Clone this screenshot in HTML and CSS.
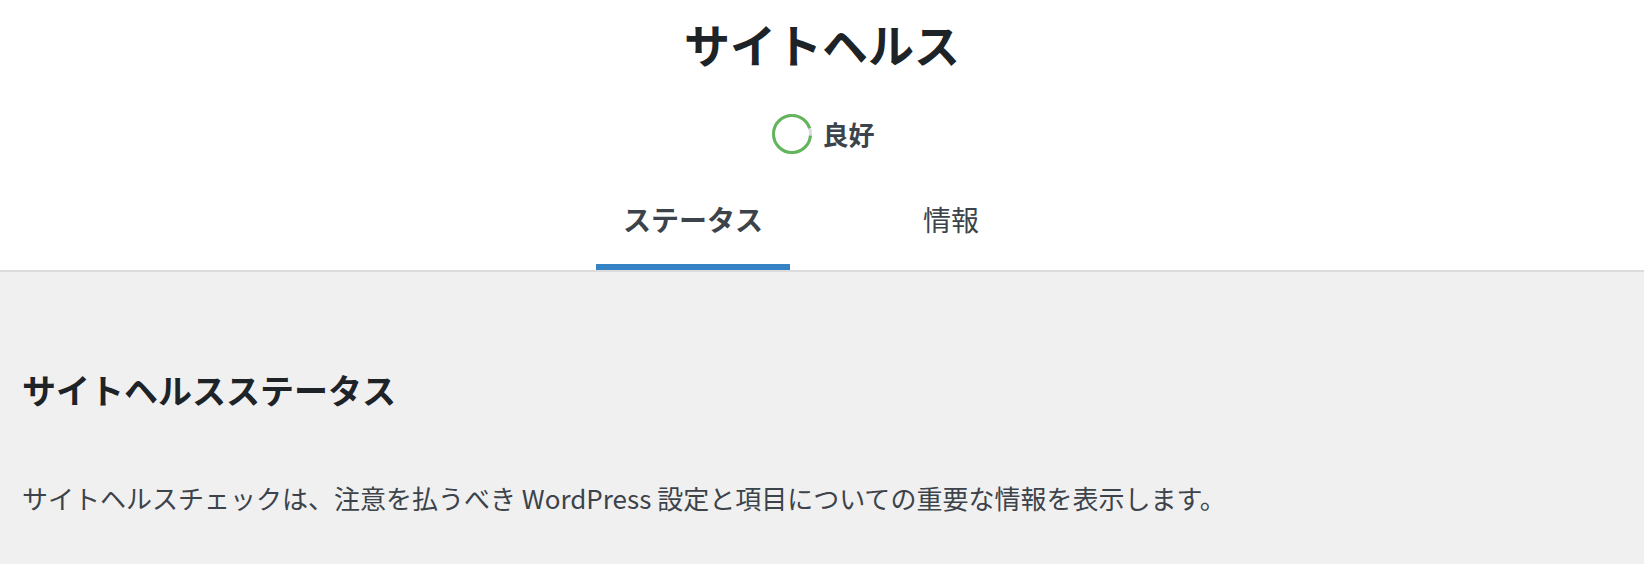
FILE: index.html
```html
<!DOCTYPE html>
<html lang="ja">
<head>
    <meta charset="UTF-8">
    <meta name="viewport" content="width=device-width, initial-scale=1.0">
    <title>サイトヘルス</title>
    <link rel="stylesheet" href="styles.css">
</head>
<body>
    <div class="health-header">
        <h1 class="health-title">サイトヘルス</h1>

        <div class="progress-wrapper">
            <svg class="progress-ring" width="40" height="40" viewBox="0 0 40 40">
                <circle cx="20" cy="20" r="18.5" fill="none" stroke="#dcdcde" stroke-width="3"></circle>
                <circle cx="20" cy="20" r="18.5" fill="none" stroke="#62b55a" stroke-width="3"
                        stroke-dasharray="108.1 8.1" stroke-dashoffset="-1.6"></circle>
            </svg>
            <span class="progress-label">良好</span>
        </div>

        <nav class="health-tabs">
            <a href="#" class="health-tab active">ステータス</a>
            <a href="#" class="health-tab">情報</a>
        </nav>
    </div>

    <div class="health-body">
        <h2>サイトヘルスステータス</h2>
        <p>サイトヘルスチェックは、注意を払うべき WordPress 設定と項目についての重要な情報を表示します。</p>
    </div>
</body>
</html>
```

FILE: styles.css
```css
body {
    margin: 0;
    padding: 0;
    background-color: #f0f0f1;
    color: #3c434a;
    font-family: "Noto Sans CJK JP", "Liberation Sans", sans-serif;
}

/* White header with title, score and tabs */
.health-header {
    background-color: #fff;
    border-bottom: 2px solid #dcdcde;
    display: flex;
    flex-direction: column;
    align-items: center;
}

.health-title {
    margin: 0;
    padding-top: 13px;
    font-size: 46px;
    line-height: 60px;
    font-weight: 700;
    color: #1d2327;
}

.progress-wrapper {
    margin-top: 41px;
    height: 40px;
    display: flex;
    align-items: center;
    gap: 10px;
    padding-left: 3px;
}

.progress-ring {
    display: block;
}

.progress-label {
    font-size: 26px;
    line-height: 40px;
    font-weight: 700;
    color: #3c434a;
}

.health-tabs {
    margin-top: 30px;
    display: grid;
    grid-template-columns: 258px 258px;
}

.health-tab {
    margin: 0 32px;
    padding: 16px 0 32px;
    font-size: 28px;
    line-height: 38px;
    text-align: center;
    text-decoration: none;
    color: #3c434a;
}

.health-tab.active {
    font-weight: 700;
    box-shadow: inset 0 -6px #3582c4;
}

/* Gray body area */
.health-body {
    padding: 0 22px;
}

.health-body h2 {
    margin: 94px 0 0;
    font-size: 34px;
    line-height: 48px;
    font-weight: 700;
    color: #1d2327;
}

.health-body p {
    margin: 64px 0 0;
    font-size: 26px;
    line-height: 39px;
    color: #3c434a;
}
```
